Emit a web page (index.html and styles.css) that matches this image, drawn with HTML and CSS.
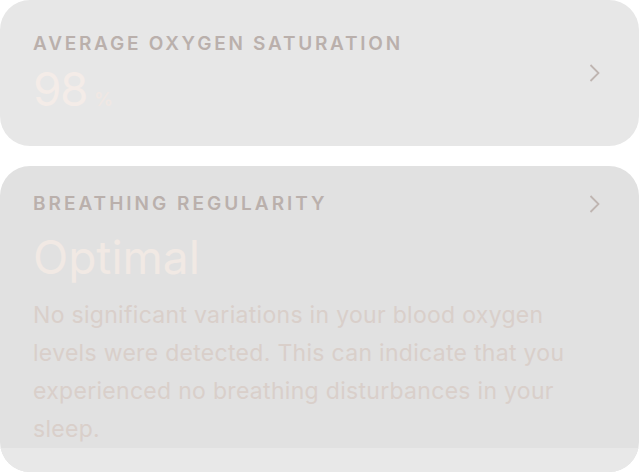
FILE: index.html
```html
<!DOCTYPE html>
<html lang="en">
<head>
<meta charset="utf-8">
<title>Sleep metrics</title>
<link rel="stylesheet" href="styles.css">
</head>
<body>
<main class="list">
  <section class="card card-sat">
    <div class="card-main">
      <h2 class="label label-sat">AVERAGE OXYGEN SATURATION</h2>
      <div class="value"><span class="num">98</span><span class="unit">%</span></div>
    </div>
    <svg class="chev" width="12" height="18" viewBox="0 0 12 18" aria-hidden="true"><path d="M1.5 1 L9.5 9 L1.5 17" fill="none" stroke="#bfb5b1" stroke-width="1.8"/></svg>
  </section>
  <section class="card card-breath">
    <div class="card-body">
      <div class="head-row">
        <h2 class="label label-breath">BREATHING REGULARITY</h2>
        <svg class="chev" width="12" height="18" viewBox="0 0 12 18" aria-hidden="true"><path d="M1.5 1 L9.5 9 L1.5 17" fill="none" stroke="#bfb5b1" stroke-width="1.8"/></svg>
      </div>
      <div class="status">Optimal</div>
      <p class="desc">No significant variations in your blood oxygen levels were detected. This can indicate that you experienced no breathing disturbances in your sleep.</p>
    </div>
    <div class="card-foot"></div>
  </section>
</main>
</body>
</html>
```
FILE: styles.css
```css
html, body {
  margin: 0;
  padding: 0;
  background: #ffffff;
}
body {
  font-family: Inter, "Noto Sans", sans-serif;
  width: 640px;
  height: 473px;
  overflow: hidden;
}
.list {
  display: flex;
  flex-direction: column;
  gap: 20px;
  width: 639px;
}
.card {
  border-radius: 30px;
  overflow: hidden;
}
.card-sat {
  background: #e7e7e7;
  height: 146px;
  box-sizing: border-box;
  padding: 33px 38px 0 33px;
  display: flex;
  align-items: flex-start;
  justify-content: space-between;
}
.card-sat .chev {
  margin-top: 31px;
}
.label {
  margin: 0;
  font-size: 19px;
  line-height: 22px;
  font-weight: 600;
  color: #bab0ac;
}
.label-sat {
  letter-spacing: 2.75px;
}
.label-breath {
  letter-spacing: 3px;
}
.value {
  display: flex;
  align-items: baseline;
  margin-top: 10px;
}
.num {
  font-size: 46px;
  line-height: 48px;
  font-weight: 400;
  color: #f4ece8;
  letter-spacing: -1.5px;
}
.unit {
  font-size: 19px;
  font-weight: 600;
  color: #f0e8e4;
  margin-left: 7px;
}
.card-breath {
  background: #e1e1e1;
  height: 306px;
  display: flex;
  flex-direction: column;
}
.card-body {
  flex: 1;
  padding: 27px 38px 0 33px;
}
.head-row {
  display: flex;
  align-items: center;
  justify-content: space-between;
}
.status {
  margin-top: 16px;
  font-size: 46px;
  line-height: 52px;
  font-weight: 400;
  color: #f1e9e4;
}
.desc {
  margin: 13px 0 0;
  font-size: 23px;
  line-height: 38px;
  letter-spacing: 0.3px;
  color: #d9cfca;
  max-width: 545px;
}
.card-foot {
  height: 26px;
  background: #e8e8e8;
}
```
